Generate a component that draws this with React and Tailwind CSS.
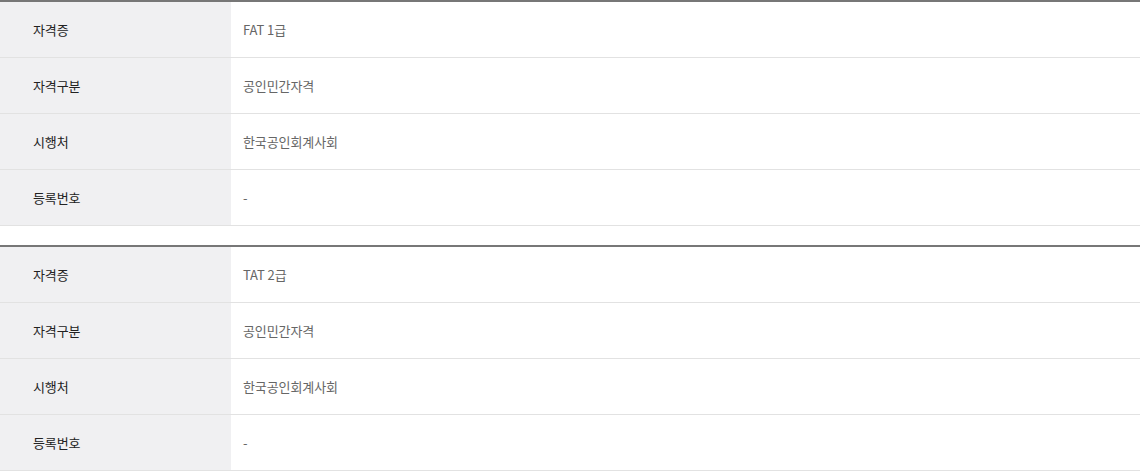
import React from 'react';

const tables = [
  [
    { label: '자격증', value: 'FAT 1급' },
    { label: '자격구분', value: '공인민간자격' },
    { label: '시행처', value: '한국공인회계사회' },
    { label: '등록번호', value: '-' },
  ],
  [
    { label: '자격증', value: 'TAT 2급' },
    { label: '자격구분', value: '공인민간자격' },
    { label: '시행처', value: '한국공인회계사회' },
    { label: '등록번호', value: '-' },
  ],
];

const App = () => {
  return (
    <div className="w-[1140px] bg-white font-['Noto_Sans_CJK_KR','Noto_Sans',sans-serif] text-[13px] tracking-[-0.1px]">
      <div className="flex flex-col gap-[19px]">
        {tables.map((rows, t) => (
          <div key={t} className="border-t-2 border-[#777777]">
            {rows.map((row, i) => (
              <div key={i} className="flex h-[56px] border-b border-[#e2e2e2]">
                <div className="w-[231px] bg-[#f0f0f2] flex items-center pl-[33px] text-[#222222]">
                  {row.label}
                </div>
                <div className="flex-1 flex items-center pl-[12px] text-[#666666]">
                  {row.value}
                </div>
              </div>
            ))}
          </div>
        ))}
      </div>
    </div>
  );
};

export default App;
